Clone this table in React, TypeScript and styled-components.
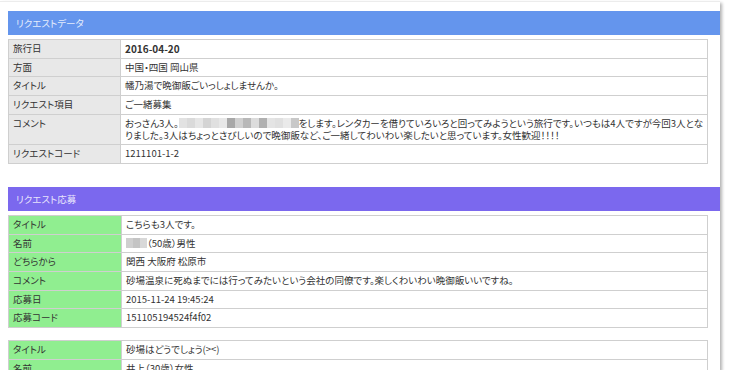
import React from 'react';
import styled, { createGlobalStyle } from 'styled-components';

const GlobalStyle = createGlobalStyle`
  body {
    margin: 0;
    background: #fff;
    font-family: "Noto Sans CJK JP", "Liberation Sans", sans-serif;
    font-feature-settings: "palt";
    color: #333;
  }
`;

const Card = styled.div`
  width: 720px;
  height: 369px;
  margin-top: 1px;
  padding-top: 9px;
  box-sizing: border-box;
  border-top: 1px solid #ececec;
  background: #fff;
  box-shadow: 2px 2px 3px rgba(0, 0, 0, 0.3);
  overflow: hidden;
`;

const Section = styled.section`
  & + & {
    margin-top: 23px;
  }
`;

const Header = styled.div<{ $color: string }>`
  margin-left: 8px;
  height: 24px;
  padding-left: 8px;
  display: flex;
  align-items: center;
  background: ${(p) => p.$color};
  color: rgba(255, 255, 255, 0.85);
  font-size: 9.5px;
`;

const Table = styled.table`
  margin: 4px 12px 0 8px;
  width: 700px;
  border-collapse: collapse;
  font-size: 9.5px;
  line-height: 11.7px;

  & + & {
    margin-top: 12px;
  }
`;

const Label = styled.th<{ $bg: string }>`
  width: 104px;
  padding: 3px 4px;
  text-align: left;
  font-weight: normal;
  vertical-align: top;
  background: ${(p) => p.$bg};
  border: 1px solid #cfcfcf;
`;

const Value = styled.td<{ $bold?: boolean }>`
  padding: 3px 4px;
  border: 1px solid #cfcfcf;
  font-weight: ${(p) => (p.$bold ? 'bold' : 'normal')};
  font-size: ${(p) => (p.$bold ? '10px' : 'inherit')};
  vertical-align: top;
`;

const Line = styled.span`
  display: block;
  white-space: nowrap;
`;

const Blur = styled.span`
  display: inline-flex;
  vertical-align: -1px;
  height: 10px;
`;

const Pixel = styled.span<{ $shade: string; $w?: number }>`
  width: ${(p) => p.$w ?? 8}px;
  height: 10px;
  background: ${(p) => p.$shade};
`;

type Row = { label: string; value: React.ReactNode; bold?: boolean };

const Mosaic = ({ shades, w }: { shades: string[]; w?: number }) => (
  <Blur>
    {shades.map((s, i) => (
      <Pixel key={i} $shade={s} $w={w} />
    ))}
  </Blur>
);

const commentBlur = ['#e2e2e2', '#dadada', '#e6e6e6', '#d4d4d4', '#e0e0e0', '#e8e8e8', '#a8a8a8', '#d0d0d0', '#b8b8b8', '#dcdcdc', '#b0b0b0', '#e4e4e4', '#e0e0e0', '#eaeaea', '#c8c8c8'];

const requestRows: Row[] = [
  { label: '旅行日', value: '2016-04-20', bold: true },
  { label: '方面', value: '中国・四国 岡山県' },
  { label: 'タイトル', value: '幡乃湯で晩御飯ごいっしょしませんか。' },
  { label: 'リクエスト項目', value: 'ご一緒募集' },
  {
    label: 'コメント',
    value: (
      <>
        <Line>
          おっさん3人。
          <Mosaic shades={commentBlur} />
          をします。レンタカーを借りていろいろと回ってみようという旅行です。いつもは4人ですが今回3人とな
        </Line>
        <Line>りました。3人はちょっとさびしいので晩御飯など、ご一緒してわいわい楽したいと思っています。女性歓迎！！！！</Line>
      </>
    ),
  },
  { label: 'リクエストコード', value: '1211101-1-2' },
];

const replies: Row[][] = [
  [
    { label: 'タイトル', value: 'こちらも3人です。' },
    {
      label: '名前',
      value: (
        <>
          <Mosaic shades={['#cfcfcf', '#c4c4c4', '#d8d8d8']} w={7} />
          （50歳）男性
        </>
      ),
    },
    { label: 'どちらから', value: '関西 大阪府 松原市' },
    { label: 'コメント', value: '砂場温泉に死ぬまでには行ってみたいという会社の同僚です。楽しくわいわい晩御飯いいですね。' },
    { label: '応募日', value: '2015-11-24 19:45:24' },
    { label: '応募コード', value: '151105194524f4f02' },
  ],
  [
    { label: 'タイトル', value: '砂場はどうでしょう(><)' },
    { label: '名前', value: '井上（30歳）女性' },
    { label: 'どちらから', value: '関西 大阪府 堺市' },
  ],
];

const DataTable = ({ rows, labelBg }: { rows: Row[]; labelBg: string }) => (
  <Table>
    <tbody>
      {rows.map((r, i) => (
        <tr key={i}>
          <Label $bg={labelBg}>{r.label}</Label>
          <Value $bold={r.bold}>{r.value}</Value>
        </tr>
      ))}
    </tbody>
  </Table>
);

const App: React.FC = () => (
  <>
    <GlobalStyle />
    <Card>
      <Section>
        <Header $color="#6495ed">リクエストデータ</Header>
        <DataTable rows={requestRows} labelBg="#e8e8e8" />
      </Section>
      <Section>
        <Header $color="#7b68ee">リクエスト応募</Header>
        {replies.map((rows, i) => (
          <DataTable key={i} rows={rows} labelBg="#90ee90" />
        ))}
      </Section>
    </Card>
  </>
);

export default App;
